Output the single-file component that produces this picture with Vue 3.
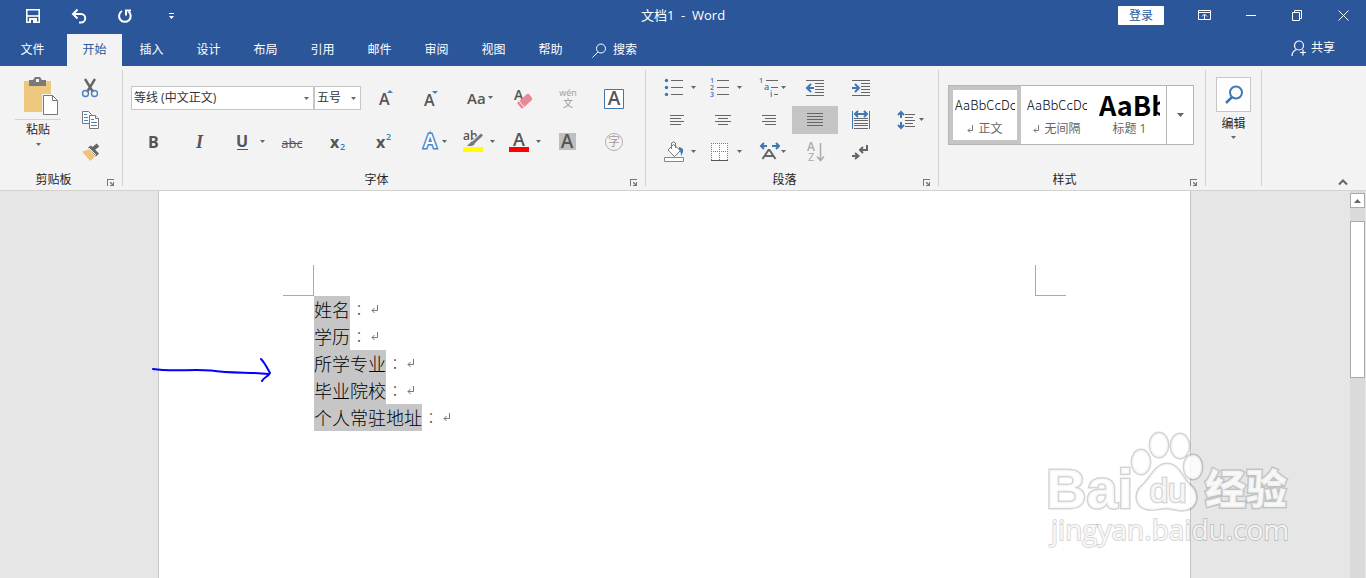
<template>
  <div class="word">
    <!-- 标题栏 -->
    <header class="title-bar">
      <div class="quick-access">
        <button class="quick-btn" aria-label="保存">
          <svg width="16" height="16" viewBox="0 0 16 16" fill="none" stroke="#fff" stroke-width="1.600">
            <path d="M1.800 1.800h12.400v12.400H1.800z" />
            <path d="M2 8h12" />
            <path d="M4 10h8v5H4z" fill="#fff" stroke="none" />
            <path d="M6 12h2v3H6z" fill="#2b579a" stroke="none" />
          </svg>
        </button>
        <button class="quick-btn" aria-label="撤消">
          <svg width="16" height="16" viewBox="0 0 16 16" fill="none" stroke="#fff" stroke-width="2">
            <path d="M2 6h8a4 4 0 0 1 0 8.500h-2" />
            <path d="M6.500 1.500L2 6l4.500 4.500" />
          </svg>
        </button>
        <button class="quick-btn" aria-label="重复">
          <svg width="16" height="16" viewBox="0 0 16 16" fill="none" stroke="#fff" stroke-width="2">
            <path d="M5 3a5.800 5.800 0 1 0 6.500 0.500" />
            <path d="M9 7.500V2.500h5" />
          </svg>
        </button>
        <button class="quick-btn" aria-label="自定义快速访问工具栏">
          <svg width="7" height="8" viewBox="0 0 7 8" fill="#fff"><path d="M1 1h5v1H1zM1 4h5L3.500 7z" /></svg>
        </button>
      </div>
      <h1 class="doc-title">文档1&nbsp; -&nbsp; Word</h1>
      <div class="window-tools">
        <button class="login-btn">登录</button>
        <button class="window-btn" aria-label="功能区显示选项">
          <svg width="14" height="12" viewBox="0 0 14 12" fill="none" stroke="#fff">
            <path d="M.5 1.500h12v9H.5zM.5 3.500h12M6.500 10V5.500M4 7.500L6.500 5 9 7.500" />
          </svg>
        </button>
        <button class="window-btn" aria-label="最小化">
          <svg width="10" height="2" viewBox="0 0 10 2"><path d="M0 1.500h10" stroke="#fff" /></svg>
        </button>
        <button class="window-btn" aria-label="还原">
          <svg width="11" height="11" viewBox="0 0 11 11" fill="none" stroke="#fff">
            <path d="M.5 2.500h7v8h-7zM2.500 2V.5h7v8H8" />
          </svg>
        </button>
        <button class="window-btn" aria-label="关闭">
          <svg width="11" height="11" viewBox="0 0 11 11" stroke="#fff"><path d="M.5.5l10 10M10.500.5l-10 10" /></svg>
        </button>
      </div>
    </header>

    <!-- 选项卡 -->
    <nav class="tab-bar">
      <button
        v-for="tab in tabs"
        :key="tab"
        class="tab"
        :class="{ file: tab === '文件', active: tab === activeTab }"
        @click="activeTab = tab"
      >
        {{ tab }}
      </button>
      <button class="tab-search">
        <svg width="15" height="15" viewBox="0 0 15 15" fill="none" stroke="#fff">
          <circle cx="9" cy="5.500" r="4.500" /><path d="M6 9L.5 14.500" />
        </svg>
        搜索
      </button>
      <button class="share-btn">
        <svg width="16" height="17" viewBox="0 0 16 17" fill="none" stroke="#fff" stroke-width="1.200">
          <circle cx="8" cy="5.500" r="4.500" />
          <path d="M1 16c0-3 2-5.500 4.500-6.500M9 12.500h6M12 9.500v6" />
        </svg>
        共享
      </button>
    </nav>

    <!-- 功能区 -->
    <div class="ribbon">
      <section class="group">
        <div class="group-body clipboard">
          <button class="paste-btn">
            <svg class="paste-icon" width="36" height="40" viewBox="0 0 36 40">
              <path d="M1 4h27v31H1z" fill="#edc87e" />
              <path d="M6 3h4l2-3h5l2 3h4v6H6z" fill="#7a7a7a" />
              <path d="M13 2h3v3h-3z" fill="#f3f3f3" />
              <path d="M19 17h12l5 5v18H19z" fill="#f3f3f3" />
              <path d="M20.500 18.500h9l5 5v14h-14z" fill="#fff" stroke="#777" />
              <path d="M29.500 18.500v5h5" fill="none" stroke="#777" />
            </svg>
            <span class="paste-label">粘贴</span>
            <svg class="caret" width="5" height="3" viewBox="0 0 5 3"><path d="M0 0h5L2.500 3z" /></svg>
          </button>
          <div class="clip-tools">
            <button class="tool" aria-label="剪切">
              <svg width="46" height="28" viewBox="0 0 46 28" fill="none">
                <path d="M18 5l8 13M28 5L20 18" stroke="#666" stroke-width="2.400" />
                <circle cx="18.500" cy="19.500" r="3" stroke="#4a80bd" stroke-width="1.400" />
                <circle cx="27.500" cy="19.500" r="3" stroke="#4a80bd" stroke-width="1.400" />
              </svg>
            </button>
            <button class="tool" aria-label="复制">
              <svg width="46" height="28" viewBox="0 0 46 28" fill="#fff" stroke="#777">
                <path d="M15.500 5.500h6l3 3v9h-9z" />
                <path d="M17 8.500h3M17 11.500h4M17 14.500h4" stroke="#4a80bd" />
                <path d="M22.500 9.500h6l3 3v10h-9z" />
                <path d="M28.500 9.500v3h3" />
                <path d="M24 13.500h3M24 16.500h6M24 19.500h6" stroke="#4a80bd" />
              </svg>
            </button>
            <button class="tool" aria-label="格式刷">
              <svg width="46" height="28" viewBox="0 0 46 28">
                <path d="M15 13.500l7-2 6 7-5 4.500z" fill="#edc27a" />
                <path d="M21 9.500l3-2 8 8-3 3z" fill="#666" />
                <path d="M26 11l5-4" stroke="#666" stroke-width="4" />
                <path d="M22 10l7 7" stroke="#f3f3f3" />
              </svg>
            </button>
          </div>
        </div>
        <footer class="group-footer">
          <span>剪贴板</span>
          <button class="launcher" aria-label="剪贴板选项"><svg viewBox="0 0 8 8"><path :d="launcher" /></svg></button>
        </footer>
      </section>

      <section class="group">
        <div class="group-body font">
          <div class="row">
            <div class="combo font-name">
              <select v-model="fontName" aria-label="字体">
                <option>等线 (中文正文)</option>
                <option>宋体</option>
              </select>
              <svg class="caret" width="5" height="3" viewBox="0 0 5 3"><path d="M0 0h5L2.500 3z" /></svg>
            </div>
            <div class="combo font-size">
              <select v-model="fontSize" aria-label="字号">
                <option>五号</option>
                <option>四号</option>
              </select>
              <svg class="caret" width="5" height="3" viewBox="0 0 5 3"><path d="M0 0h5L2.500 3z" /></svg>
            </div>
            <button class="tool" aria-label="增大字号">
              <svg width="46" height="28" viewBox="0 0 46 28">
                <text x="18" y="21" class="glyph semi" font-size="16">A</text>
                <path d="M26 9h6l-3-3z" fill="#4a80bd" />
              </svg>
            </button>
            <button class="tool" aria-label="减小字号">
              <svg width="46" height="28" viewBox="0 0 46 28">
                <text x="17" y="22" class="glyph semi" font-size="16">A</text>
                <path d="M25 7h6l-3 3z" fill="#4a80bd" />
              </svg>
            </button>
            <button class="tool" aria-label="更改大小写">
              <svg width="46" height="28" viewBox="0 0 46 28">
                <text x="14" y="20" class="glyph semi" font-size="15">Aa</text>
                <path :d="caretAt(35)" class="arrow" />
              </svg>
            </button>
            <button class="tool" aria-label="清除所有格式">
              <svg width="46" height="28" viewBox="0 0 46 28">
                <text x="15" y="16" class="glyph semi" font-size="14">A</text>
                <path d="M18 19l10-9q1-.5 2 0l3 4q.5 1 0 2l-9 8q-1 .5-2 0z" fill="#e8869a" />
                <path d="M20 17l5 6" stroke="#f3f3f3" />
              </svg>
            </button>
            <button class="tool" aria-label="拼音指南">
              <svg width="46" height="28" viewBox="0 0 46 28" fill="#9a9a9a" text-anchor="middle">
                <text x="23" y="12" font-size="9">wén</text>
                <text x="23" y="23" font-size="10">文</text>
              </svg>
            </button>
            <button class="tool" aria-label="字符边框">
              <svg width="46" height="28" viewBox="0 0 46 28">
                <path d="M13.500 5.500h19v19h-19z" fill="#fff" stroke="#3f77b5" />
                <text x="23" y="21" class="glyph semi" font-size="19" text-anchor="middle">A</text>
              </svg>
            </button>
          </div>
          <div class="row">
            <button class="tool" aria-label="加粗">
              <svg width="46" height="28" viewBox="0 0 46 28"><text x="17" y="20" class="glyph bold" font-size="16">B</text></svg>
            </button>
            <button class="tool" aria-label="倾斜">
              <svg width="46" height="28" viewBox="0 0 46 28"><text x="19" y="20" class="glyph italic" font-size="18">I</text></svg>
            </button>
            <button class="tool" aria-label="下划线">
              <svg width="46" height="28" viewBox="0 0 46 28">
                <text x="13" y="19" class="glyph bold" font-size="16">U</text>
                <path d="M14 21.500h11" stroke="#555" />
                <path :d="caretAt(37)" class="arrow" />
              </svg>
            </button>
            <button class="tool" aria-label="删除线">
              <svg width="46" height="28" viewBox="0 0 46 28">
                <text x="23" y="20" class="glyph" font-size="13" text-anchor="middle">abc</text>
                <path d="M13 15.500h20" stroke="#555" />
              </svg>
            </button>
            <button class="tool" aria-label="下标">
              <svg width="46" height="28" viewBox="0 0 46 28">
                <text x="15" y="20" class="glyph bold" font-size="16">x</text>
                <text x="25" y="22" class="blue" font-size="9">2</text>
              </svg>
            </button>
            <button class="tool" aria-label="上标">
              <svg width="46" height="28" viewBox="0 0 46 28">
                <text x="15" y="20" class="glyph bold" font-size="16">x</text>
                <text x="25" y="12" class="blue" font-size="9">2</text>
              </svg>
            </button>
            <button class="tool" aria-label="文本效果">
              <svg width="46" height="28" viewBox="0 0 46 28">
                <text x="23" y="20" font-size="19" text-anchor="middle" class="effect">A</text>
                <path :d="caretAt(35)" class="arrow" />
              </svg>
            </button>
            <button class="tool" aria-label="突出显示">
              <svg width="46" height="28" viewBox="0 0 46 28">
                <text x="10" y="12" class="glyph semi" font-size="12">ab</text>
                <path d="M29 6.500L18 17" stroke="#f3f3f3" stroke-width="5" />
                <path d="M29 6.500L20 15" stroke="#777" stroke-width="3" />
                <path d="M19 13l3 3-3 2h-5z" fill="#777" />
                <path d="M10 19h20v5H10z" fill="#ff0" />
                <path :d="caretAt(37)" class="arrow" />
              </svg>
            </button>
            <button class="tool" aria-label="字体颜色">
              <svg width="46" height="28" viewBox="0 0 46 28">
                <text x="20" y="18" class="glyph semi" font-size="18" text-anchor="middle">A</text>
                <path d="M10 19h20v5H10z" fill="#f00" />
                <path :d="caretAt(37)" class="arrow" />
              </svg>
            </button>
            <button class="tool" aria-label="字符底纹">
              <svg width="46" height="28" viewBox="0 0 46 28">
                <path d="M14 5h17v17H14z" fill="#bfbfbf" />
                <text x="22" y="20" class="glyph semi" font-size="19" text-anchor="middle">A</text>
              </svg>
            </button>
            <button class="tool" aria-label="带圈字符">
              <svg width="46" height="28" viewBox="0 0 46 28">
                <circle cx="23" cy="14" r="8.500" fill="none" stroke="#b5adb5" />
                <text x="23" y="18" font-size="12" fill="#a49aa4" text-anchor="middle">字</text>
              </svg>
            </button>
          </div>
        </div>
        <footer class="group-footer">
          <span>字体</span>
          <button class="launcher" aria-label="字体选项"><svg viewBox="0 0 8 8"><path :d="launcher" /></svg></button>
        </footer>
      </section>

      <section class="group">
        <div class="group-body paragraph">
          <button class="tool" aria-label="项目符号">
            <svg width="46" height="28" viewBox="0 0 46 28">
              <path d="M17 6.500h12M17 13.500h12M17 20.500h12" class="line" />
              <g fill="#3f77b5"><circle cx="12.500" cy="6.500" r="1.700" /><circle cx="12.500" cy="13.500" r="1.700" /><circle cx="12.500" cy="20.500" r="1.700" /></g>
              <path :d="caretAt(37)" class="arrow" />
            </svg>
          </button>
          <button class="tool" aria-label="编号">
            <svg width="46" height="28" viewBox="0 0 46 28">
              <path d="M17 6.500h12M17 13.500h12M17 20.500h12" class="line" />
              <text v-for="n in 3" :key="n" x="10" :y="n * 7 + 2" class="blue" font-size="7">{{ n }}</text>
              <path :d="caretAt(37)" class="arrow" />
            </svg>
          </button>
          <button class="tool" aria-label="多级列表">
            <svg width="46" height="28" viewBox="0 0 46 28">
              <path d="M20 6.500h12M25 13.500h7M28 20.500h4" class="line" />
              <text x="13" y="9" class="blue" font-size="7">1</text>
              <text x="18" y="16" class="blue" font-size="9">a</text>
              <text x="24" y="23" class="blue" font-size="8">i</text>
              <path :d="caretAt(35)" class="arrow" />
            </svg>
          </button>
          <button class="tool" aria-label="减少缩进量">
            <svg width="46" height="28" viewBox="0 0 46 28">
              <path d="M14 6.500h18M23 9.500h9M23 12.500h9M23 15.500h9M23 18.500h9M14 21.500h18" class="line" />
              <path d="M22 14h-6M19 10l-4 4 4 4" class="blue-line" />
            </svg>
          </button>
          <button class="tool" aria-label="增加缩进量">
            <svg width="46" height="28" viewBox="0 0 46 28">
              <path d="M14 6.500h18M23 9.500h9M23 12.500h9M23 15.500h9M23 18.500h9M14 21.500h18" class="line" />
              <path d="M14 14h6M17 10l4 4-4 4" class="blue-line" />
            </svg>
          </button>
          <span></span>
          <button class="tool" aria-label="左对齐">
            <svg width="46" height="28" viewBox="0 0 46 28"><path d="M16 9.500h14M16 12.500h11M16 15.500h14M16 18.500h11" class="line" /></svg>
          </button>
          <button class="tool" aria-label="居中">
            <svg width="46" height="28" viewBox="0 0 46 28"><path d="M15 9.500h16M18 12.500h10M15 15.500h16M18 18.500h10" class="line" /></svg>
          </button>
          <button class="tool" aria-label="右对齐">
            <svg width="46" height="28" viewBox="0 0 46 28"><path d="M16 9.500h14M19 12.500h11M16 15.500h14M19 18.500h11" class="line" /></svg>
          </button>
          <button class="tool pressed" aria-label="两端对齐">
            <svg width="46" height="28" viewBox="0 0 46 28"><path d="M15 7.500h16M15 10.500h16M15 13.500h16M15 16.500h16M15 19.500h16" class="line" /></svg>
          </button>
          <button class="tool" aria-label="分散对齐">
            <svg width="46" height="28" viewBox="0 0 46 28">
              <path d="M16 12.500h14M16 14.500h14M16 17.500h14M16 19.500h14M16 22.500h14" class="line" />
              <path d="M14.500 5v18M31.500 5v18" stroke="#3f77b5" />
              <path d="M18 8h10M20 5l-3 3 3 3M26 5l3 3-3 3" class="blue-line" />
            </svg>
          </button>
          <button class="tool" aria-label="行和段落间距">
            <svg width="46" height="28" viewBox="0 0 46 28">
              <path d="M21 8.500h10M21 11.500h8M21 14.500h10M21 17.500h8M21 20.500h10" class="line" />
              <path d="M17 7v5M14 9l3-3 3 3M17 16v5M14 19l3 3 3-3" class="blue-line" />
              <path :d="caretAt(35)" class="arrow" />
            </svg>
          </button>
          <button class="tool" aria-label="底纹">
            <svg width="46" height="28" viewBox="0 0 46 28">
              <path d="M19.500 6.500l7 6-6 6-6.500-6.500z" fill="#fff" stroke="#777" />
              <path d="M17.500 11V5q2-2.500 4 0v5" fill="none" stroke="#777" />
              <path d="M25 9q5 1 4 5l-2 4q0-5-2-6z" fill="#3f77b5" />
              <path d="M10.500 19.500h19v4h-19z" fill="#fff" stroke="#888" />
              <path :d="caretAt(37)" class="arrow" />
            </svg>
          </button>
          <button class="tool" aria-label="边框">
            <svg width="46" height="28" viewBox="0 0 46 28" fill="none" stroke="#777">
              <path d="M11 5h17v17H11z" fill="#fff" stroke="none" />
              <path d="M11 5.500h17M11 13.500h17M11.500 5v17M19.500 5v17M27.500 5v17" stroke-dasharray="1 1" />
              <path d="M11 22.500h17" stroke="#555" />
              <path :d="caretAt(37)" class="arrow" stroke="none" />
            </svg>
          </button>
          <button class="tool" aria-label="中文版式">
            <svg width="46" height="28" viewBox="0 0 46 28">
              <path d="M16.500 21l6-9h1l6 9M19 18h8" fill="none" stroke="#666" stroke-width="2" />
              <path d="M21 8h-5M18 5l-3 3 3 3M26 8h6M30 5l3 3-3 3" class="blue-line" />
              <path :d="caretAt(35)" class="arrow" />
            </svg>
          </button>
          <button class="tool" aria-label="排序">
            <svg width="46" height="28" viewBox="0 0 46 28" fill="#aaa">
              <text x="15" y="13" font-size="12" class="semi">A</text>
              <text x="16" y="23" font-size="11">Z</text>
              <path d="M28.500 5v17M25 18.500l3.500 4 3.500-4" fill="none" stroke="#aaa" stroke-width="1.500" />
            </svg>
          </button>
          <button class="tool" aria-label="显示编辑标记">
            <svg width="46" height="28" viewBox="0 0 46 28" fill="none" stroke="#666" stroke-width="2">
              <path d="M29 7v5h-6M25 9l-3 3 3 3M14 18h6M17 15l3.500 3-3.500 3" />
            </svg>
          </button>
        </div>
        <footer class="group-footer">
          <span>段落</span>
          <button class="launcher" aria-label="段落选项"><svg viewBox="0 0 8 8"><path :d="launcher" /></svg></button>
        </footer>
      </section>

      <section class="group">
        <div class="group-body styles">
          <div class="gallery">
            <button
              v-for="item in styleItems"
              :key="item.name"
              class="style-item"
              :class="{ selected: item.name === activeStyle, heading: item.heading }"
              @click="activeStyle = item.name"
            >
              <span class="sample">AaBbCcDc</span>
              <span class="style-name">
                <svg v-if="!item.heading" width="7" height="8" viewBox="0 0 7 8" fill="none" stroke="#777">
                  <path d="M5.500 0v5.500H1M3 3.500l-2 2 2 2" />
                </svg>
                {{ item.name }}
              </span>
            </button>
            <button class="gallery-more" aria-label="其他样式">
              <svg class="caret" width="7" height="4" viewBox="0 0 7 4"><path d="M0 0h7L3.500 4z" /></svg>
            </button>
          </div>
        </div>
        <footer class="group-footer">
          <span>样式</span>
          <button class="launcher" aria-label="样式选项"><svg viewBox="0 0 8 8"><path :d="launcher" /></svg></button>
        </footer>
      </section>

      <section class="group">
        <button class="edit-btn">
          <span class="edit-icon">
            <svg width="20" height="20" viewBox="0 0 20 20" fill="none" stroke="#3f77b5" stroke-width="2">
              <circle cx="12" cy="7.500" r="6" /><path d="M8 12l-6 6" stroke-width="2.500" />
            </svg>
          </span>
          <span>编辑</span>
          <svg class="caret" width="5" height="3" viewBox="0 0 5 3"><path d="M0 0h5L2.500 3z" /></svg>
        </button>
      </section>

      <button class="collapse-btn" aria-label="折叠功能区">
        <svg width="10" height="7" viewBox="0 0 10 7" fill="none" stroke="#666" stroke-width="2"><path d="M1 5.500l4-4 4 4" /></svg>
      </button>
    </div>

    <!-- 文档区 -->
    <main class="workspace">
      <div class="canvas">
        <article class="page">
          <div class="crop-marks"><i class="crop left"></i><i class="crop right"></i></div>
          <p v-for="line in lines" :key="line" class="line-text">
            <mark>{{ line }}</mark><span class="colon">：</span>
            <svg width="8" height="9" viewBox="0 0 8 9" fill="none" stroke="#777"><path d="M6.500 0v5.500H1M3.500 3L1 5.500 3.500 8" /></svg>
          </p>
          <svg class="pen-arrow" width="122" height="28" viewBox="0 0 122 28" fill="none" stroke="#00f" stroke-width="2" stroke-linecap="round" stroke-linejoin="round">
            <path d="M1 13c18 3 38 0 58 1.500 20 3 40 1.500 57 3.500M109 3c4 4 6 9 9 14-2 4-6 4-8 8" />
          </svg>
        </article>
      </div>
      <div class="scrollbar">
        <button class="scroll-up" aria-label="向上滚动">
          <svg width="7" height="4" viewBox="0 0 7 4"><path d="M0 4h7L3.500 0z" fill="#666" /></svg>
        </button>
        <div class="thumb"></div>
      </div>
      <svg class="watermark" width="250" height="122" viewBox="0 0 250 122">
        <g class="wm">
          <text x="0" y="80" font-size="56" class="wm-bold">Bai</text>
          <ellipse cx="113" cy="17" rx="9" ry="12" />
          <ellipse cx="134" cy="18" rx="9" ry="12" />
          <ellipse cx="95" cy="34" rx="9" ry="12" />
          <ellipse cx="147" cy="39" rx="9" ry="12" />
          <path d="M121 36c12 0 15 14 23 21 10 8 8 24-6 25-8 1-12-2-18-2s-12 3-19 1c-12-2-13-16-5-23 8-6 13-22 25-22z" />
          <text x="122" y="74" font-size="33" text-anchor="middle" class="wm-du">du</text>
          <text x="159" y="76" font-size="41" class="wm-cjk">经验</text>
          <text x="5" y="112" font-size="28" class="wm-url">jingyan.baidu.com</text>
        </g>
      </svg>
    </main>
  </div>
</template>

<script setup>
import { ref } from "vue";

// 选项卡
const tabs = ["文件", "开始", "插入", "设计", "布局", "引用", "邮件", "审阅", "视图", "帮助"];
const activeTab = ref("开始");

// 字体设置
const fontName = ref("等线 (中文正文)");
const fontSize = ref("五号");

// 样式库
const styleItems = [
  { name: "正文" },
  { name: "无间隔" },
  { name: "标题 1", heading: true }
];
const activeStyle = ref("正文");

// 文档内容
const lines = ["姓名", "学历", "所学专业", "毕业院校", "个人常驻地址"];

// 分组右下角的启动图标
const launcher = "M0 0h7v1H1v6H0zM3 3h1l2 2V3h1v4H3V6h2L3 4z";

// 按钮里的下拉三角
const caretAt = (x) => `M${x} 12h5l-2.500 3z`;
</script>

<style>
body {
  margin: 0;
}
</style>

<style scoped>
.word {
  display: flex;
  flex-direction: column;
  min-height: 100vh;
  font-family: "Open Sans", "Noto Sans CJK SC", sans-serif;
  font-size: 12px;
  line-height: 16px;
  color: #262626;
}

button {
  display: flex;
  align-items: center;
  justify-content: center;
  padding: 0;
  border: none;
  background: none;
  font: inherit;
  color: inherit;
}

svg {
  display: block;
  flex: none;
}

/* 标题栏 */
.title-bar {
  display: grid;
  grid-template-columns: 1fr auto 1fr;
  height: 34px;
  background: #2b579a;
  color: #fff;
}

.quick-access {
  display: flex;
  padding-left: 10px;
}

.quick-btn,
.window-btn {
  width: 46px;
  height: 32px;
}

.doc-title {
  margin: 0;
  font-size: 13px;
  font-weight: 400;
  line-height: 30px;
}

.window-tools {
  display: flex;
  justify-content: flex-end;
}

.window-btn {
  height: 30px;
}

.login-btn {
  width: 46px;
  height: 19px;
  margin: 6px 18px 0 0;
  border-radius: 1px;
  background: #fff;
  color: #2b579a;
}

/* 选项卡 */
.tab-bar {
  display: flex;
  gap: 2px;
  height: 32px;
  background: #2b579a;
  color: #fff;
}

.tab {
  width: 55px;
}

.tab.file {
  width: 65px;
}

.tab.active {
  background: #f3f3f3;
  color: #2b579a;
}

.tab-search {
  gap: 6px;
  margin-left: 12px;
}

.share-btn {
  gap: 4px;
  margin: 0 31px 4px auto;
}

/* 功能区 */
.ribbon {
  display: flex;
  padding: 4px 0;
  border-bottom: 1px solid #d2d2d2;
  background: #f3f3f3;
}

.group {
  display: flex;
  flex-direction: column;
  justify-content: space-between;
  min-height: 116px;
  border-right: 1px solid #d2d2d2;
}

.group-footer {
  display: flex;
  align-items: center;
  height: 12px;
  padding-right: 7px;
  line-height: 12px;
}

.group-footer span {
  flex: 1;
  text-align: center;
}

.launcher {
  width: 8px;
  height: 8px;
  margin-top: 6px;
}

.launcher svg {
  width: 8px;
  height: 8px;
  fill: #777;
}

.caret,
.arrow {
  fill: #666;
}

.tool {
  width: 46px;
  height: 28px;
}

.tool.pressed {
  background: #c5c5c5;
}

.clipboard {
  display: flex;
  gap: 6px;
  padding: 4px 9px 0 15px;
}

.paste-btn {
  flex-direction: column;
  justify-content: flex-start;
  width: 46px;
  padding-top: 3px;
}

.paste-icon {
  margin-left: 6px;
}

.paste-label {
  width: 46px;
  margin: 2px 0 5px;
  padding-top: 2px;
  border-top: 1px solid #d2d2d2;
}

.clip-tools {
  display: grid;
  gap: 4px;
}

.font {
  display: grid;
  gap: 16px;
  padding: 14px 8px 0;
}

.row {
  display: flex;
  align-items: center;
}

.combo {
  display: grid;
  align-items: center;
  box-sizing: border-box;
  height: 24px;
  border: 1px solid #c6c6c6;
  background: #fff;
}

.combo select,
.combo .caret {
  grid-area: 1 / 1;
}

.combo select {
  appearance: none;
  width: 100%;
  height: 22px;
  padding: 0 0 0 2px;
  border: none;
  background: none;
  font: inherit;
  color: #333;
}

.combo .caret {
  justify-self: end;
  margin-right: 4px;
  pointer-events: none;
}

.font-name {
  width: 183px;
}

.font-size {
  width: 47px;
}

.glyph {
  fill: #555;
}

.semi {
  font-weight: 600;
}

.bold {
  font-weight: 700;
}

.italic {
  font-family: "Liberation Serif", serif;
  font-style: italic;
  font-weight: 700;
}

.blue {
  fill: #3f77b5;
  font-weight: 600;
}

.effect {
  fill: #fff;
  stroke: #4a86cc;
  stroke-width: 3;
  paint-order: stroke;
  font-weight: 600;
}

.line {
  stroke: #666;
}

.blue-line {
  fill: none;
  stroke: #3f77b5;
  stroke-width: 2;
}

.paragraph {
  display: grid;
  grid-template-columns: repeat(6, 46px);
  gap: 4px 0;
  padding: 4px 8px 0;
}

/* 样式库 */
.styles {
  padding: 15px 11px 0 9px;
}

.gallery {
  display: flex;
  height: 58px;
  border: 1px solid #b5b5b5;
  background: #fff;
}

.style-item {
  flex-direction: column;
  align-items: stretch;
  box-sizing: border-box;
  width: 72px;
  padding: 0 2px;
  border: 4px solid transparent;
}

.style-item.heading {
  width: 73px;
}

.style-item.selected {
  border-color: #c5c5c5;
}

.sample {
  height: 28px;
  overflow: hidden;
  font-family: "Noto Sans CJK SC", sans-serif;
  font-size: 13px;
  font-weight: 300;
  line-height: 28px;
  text-align: left;
  color: #000;
}

.heading .sample {
  font-size: 27px;
  font-weight: 700;
}

.style-name {
  display: flex;
  align-items: center;
  justify-content: center;
  gap: 4px;
  height: 20px;
  color: #666;
}

.gallery-more {
  width: 27px;
  border-left: 1px solid #b5b5b5;
}

.edit-btn {
  flex-direction: column;
  gap: 4px;
  padding: 7px 10px 0;
}

.edit-icon {
  display: flex;
  align-items: center;
  justify-content: center;
  width: 33px;
  height: 33px;
  border: 1px solid #c6c6c6;
  background: #fdfdfd;
}

.collapse-btn {
  align-self: flex-end;
  margin: 0 18px 0 auto;
}

/* 文档区 */
.workspace {
  position: relative;
  display: flex;
  flex: 1;
  background: #e6e6e6;
}

.canvas {
  display: flex;
  flex: 1;
  justify-content: center;
  padding-right: 1px;
}

.page {
  position: relative;
  box-sizing: border-box;
  width: 1033px;
  padding-top: 74px;
  border: solid #c6c6c6;
  border-width: 0 1px;
  background: #fff;
}

.crop-marks {
  display: flex;
  justify-content: space-between;
  padding: 0 124px;
}

.crop {
  width: 30px;
  height: 30px;
  border-bottom: 1px solid #aaa;
}

.crop.left {
  border-right: 1px solid #aaa;
}

.crop.right {
  border-left: 1px solid #aaa;
}

.line-text {
  display: flex;
  align-items: center;
  height: 27px;
  margin: 0;
  padding-left: 155px;
  font-family: "Noto Sans CJK SC", sans-serif;
  font-size: 18px;
  font-weight: 300;
  line-height: 27px;
  color: #000;
}

.line-text mark {
  background: #c6c6c6;
  color: #000;
}

.colon {
  width: 18px;
  margin-right: 3px;
  font-family: "Noto Sans CJK TC", sans-serif;
  font-size: 14px;
  text-align: center;
  color: #333;
}

.pen-arrow {
  position: absolute;
  top: 165px;
  left: -7px;
}

.scrollbar {
  display: flex;
  flex-direction: column;
  gap: 13px;
  width: 15px;
  margin-right: 1px;
  padding-top: 2px;
  background: #dadada;
}

.scroll-up,
.thumb {
  box-sizing: border-box;
  border: 1px solid #aaa;
  background: #fff;
}

.scroll-up {
  height: 15px;
}

.thumb {
  height: 157px;
}

.watermark {
  position: absolute;
  right: 70px;
  bottom: 28px;
}

.wm {
  fill: #fff;
  fill-opacity: 0.8;
  stroke: #000;
  stroke-opacity: 0.17;
  stroke-width: 3;
  paint-order: stroke;
}

.wm-bold {
  font-family: "Liberation Sans", sans-serif;
  font-weight: 700;
}

.wm-du {
  font-family: "Liberation Sans", sans-serif;
}

.wm-cjk {
  font-weight: 900;
}

.wm-url {
  font-family: "Open Sans", sans-serif;
  stroke-width: 2;
}
</style>
